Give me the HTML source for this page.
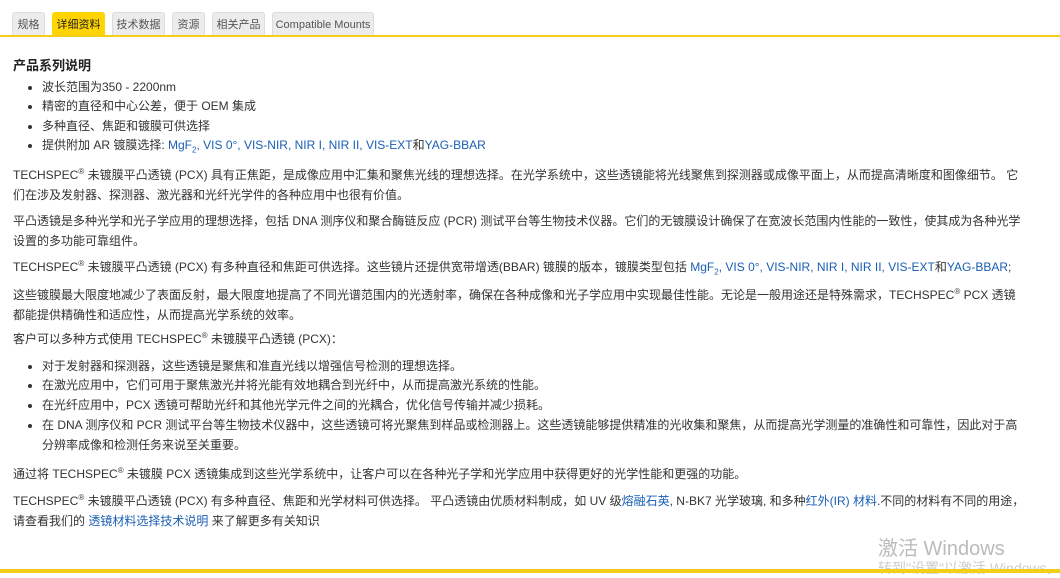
<!DOCTYPE html>
<html><head><meta charset="utf-8"><style>
body{margin:0;width:1060px;height:573px;background:#fff;position:relative;overflow:hidden;font-family:"Liberation Sans","Noto Sans CJK SC",sans-serif;font-size:12px;color:#333}
.tab{position:absolute;top:12px;height:24px;line-height:24px;background:#ececec;border:1px solid #ddd;border-bottom:none;border-radius:3px 3px 0 0;font-size:11px;color:#555;text-align:center;box-sizing:border-box;white-space:nowrap}
.tab.on{background:#ffd400;border-color:#ffd400;color:#222}
.bar{position:absolute;left:0;top:35px;width:1060px;height:2px;background:#f4cf1a}
.bot{position:absolute;left:0;top:569px;width:1060px;height:4px;background:#f4cf1a}
.l{position:absolute;left:13px;white-space:nowrap;line-height:19.5px}
.b{position:absolute;left:42px;white-space:nowrap;line-height:19.5px}
.b::before{content:"";position:absolute;left:-14px;top:8px;width:4px;height:4px;border-radius:50%;background:#333}
a{color:#1a5fb4;text-decoration:none}
sup{font-size:8px;line-height:0}
sub{font-size:8px;line-height:0}
h3{position:absolute;left:13px;top:55px;margin:0;font-size:13px;font-weight:bold;color:#222}
.wm{position:absolute;left:878px;top:532px;font-size:20px;color:#bbb;white-space:nowrap}
.wm2{position:absolute;left:878px;top:558px;font-size:14px;color:#ccc;white-space:nowrap}
</style></head><body>
<div class="tab" style="left:12px;width:33px">规格</div>
<div class="tab on" style="left:52px;width:53px">详细资料</div>
<div class="tab" style="left:112px;width:53px">技术数据</div>
<div class="tab" style="left:172px;width:33px">资源</div>
<div class="tab" style="left:212px;width:53px">相关产品</div>
<div class="tab" style="left:272px;width:102px">Compatible Mounts</div>
<div class="bar"></div>
<h3>产品系列说明</h3>
<div class="b" style="top:78px">波长范围为350 - 2200nm</div>
<div class="b" style="top:97px">精密的直径和中心公差，便于 OEM 集成</div>
<div class="b" style="top:117px">多种直径、焦距和镀膜可供选择</div>
<div class="b" style="top:136px">提供附加 AR 镀膜选择: <a>MgF<sub>2</sub>, VIS 0°, VIS-NIR, NIR I, NIR II, VIS-EXT</a>和<a>YAG-BBAR</a></div>
<div class="l" style="top:166px">TECHSPEC<sup>®</sup> 未镀膜平凸透镜 (PCX) 具有正焦距，是成像应用中汇集和聚焦光线的理想选择。在光学系统中，这些透镜能将光线聚焦到探测器或成像平面上，从而提高清晰度和图像细节。 它<br>们在涉及发射器、探测器、激光器和光纤光学件的各种应用中也很有价值。</div>
<div class="l" style="top:212px">平凸透镜是多种光学和光子学应用的理想选择，包括 DNA 测序仪和聚合酶链反应 (PCR) 测试平台等生物技术仪器。它们的无镀膜设计确保了在宽波长范围内性能的一致性，使其成为各种光学<br>设置的多功能可靠组件。</div>
<div class="l" style="top:258px">TECHSPEC<sup>®</sup> 未镀膜平凸透镜 (PCX) 有多种直径和焦距可供选择。这些镜片还提供宽带增透(BBAR) 镀膜的版本，镀膜类型包括 <a>MgF<sub>2</sub>, VIS 0°, VIS-NIR, NIR I, NIR II, VIS-EXT</a>和<a>YAG-BBAR</a>;</div>
<div class="l" style="top:286px">这些镀膜最大限度地减少了表面反射，最大限度地提高了不同光谱范围内的光透射率，确保在各种成像和光子学应用中实现最佳性能。无论是一般用途还是特殊需求，TECHSPEC<sup>®</sup> PCX 透镜<br>都能提供精确性和适应性，从而提高光学系统的效率。</div>
<div class="l" style="top:330px">客户可以多种方式使用 TECHSPEC<sup>®</sup> 未镀膜平凸透镜 (PCX)：</div>
<div class="b" style="top:357px">对于发射器和探测器，这些透镜是聚焦和准直光线以增强信号检测的理想选择。</div>
<div class="b" style="top:376px">在激光应用中，它们可用于聚焦激光并将光能有效地耦合到光纤中，从而提高激光系统的性能。</div>
<div class="b" style="top:396px">在光纤应用中，PCX 透镜可帮助光纤和其他光学元件之间的光耦合，优化信号传输并减少损耗。</div>
<div class="b" style="top:416px">在 DNA 测序仪和 PCR 测试平台等生物技术仪器中，这些透镜可将光聚焦到样品或检测器上。这些透镜能够提供精准的光收集和聚焦，从而提高光学测量的准确性和可靠性，因此对于高<br>分辨率成像和检测任务来说至关重要。</div>
<div class="l" style="top:465px">通过将 TECHSPEC<sup>®</sup> 未镀膜 PCX 透镜集成到这些光学系统中，让客户可以在各种光子学和光学应用中获得更好的光学性能和更强的功能。</div>
<div class="l" style="top:492px">TECHSPEC<sup>®</sup> 未镀膜平凸透镜 (PCX) 有多种直径、焦距和光学材料可供选择。 平凸透镜由优质材料制成，如 UV 级<a>熔融石英</a>, N-BK7 光学玻璃, 和多种<a>红外(IR) 材料</a>.不同的材料有不同的用途，<br>请查看我们的 <a>透镜材料选择技术说明</a> 来了解更多有关知识</div>
<div class="wm">激活 Windows</div>
<div class="wm2">转到"设置"以激活 Windows。</div>
<div class="bot"></div>
</body></html>
